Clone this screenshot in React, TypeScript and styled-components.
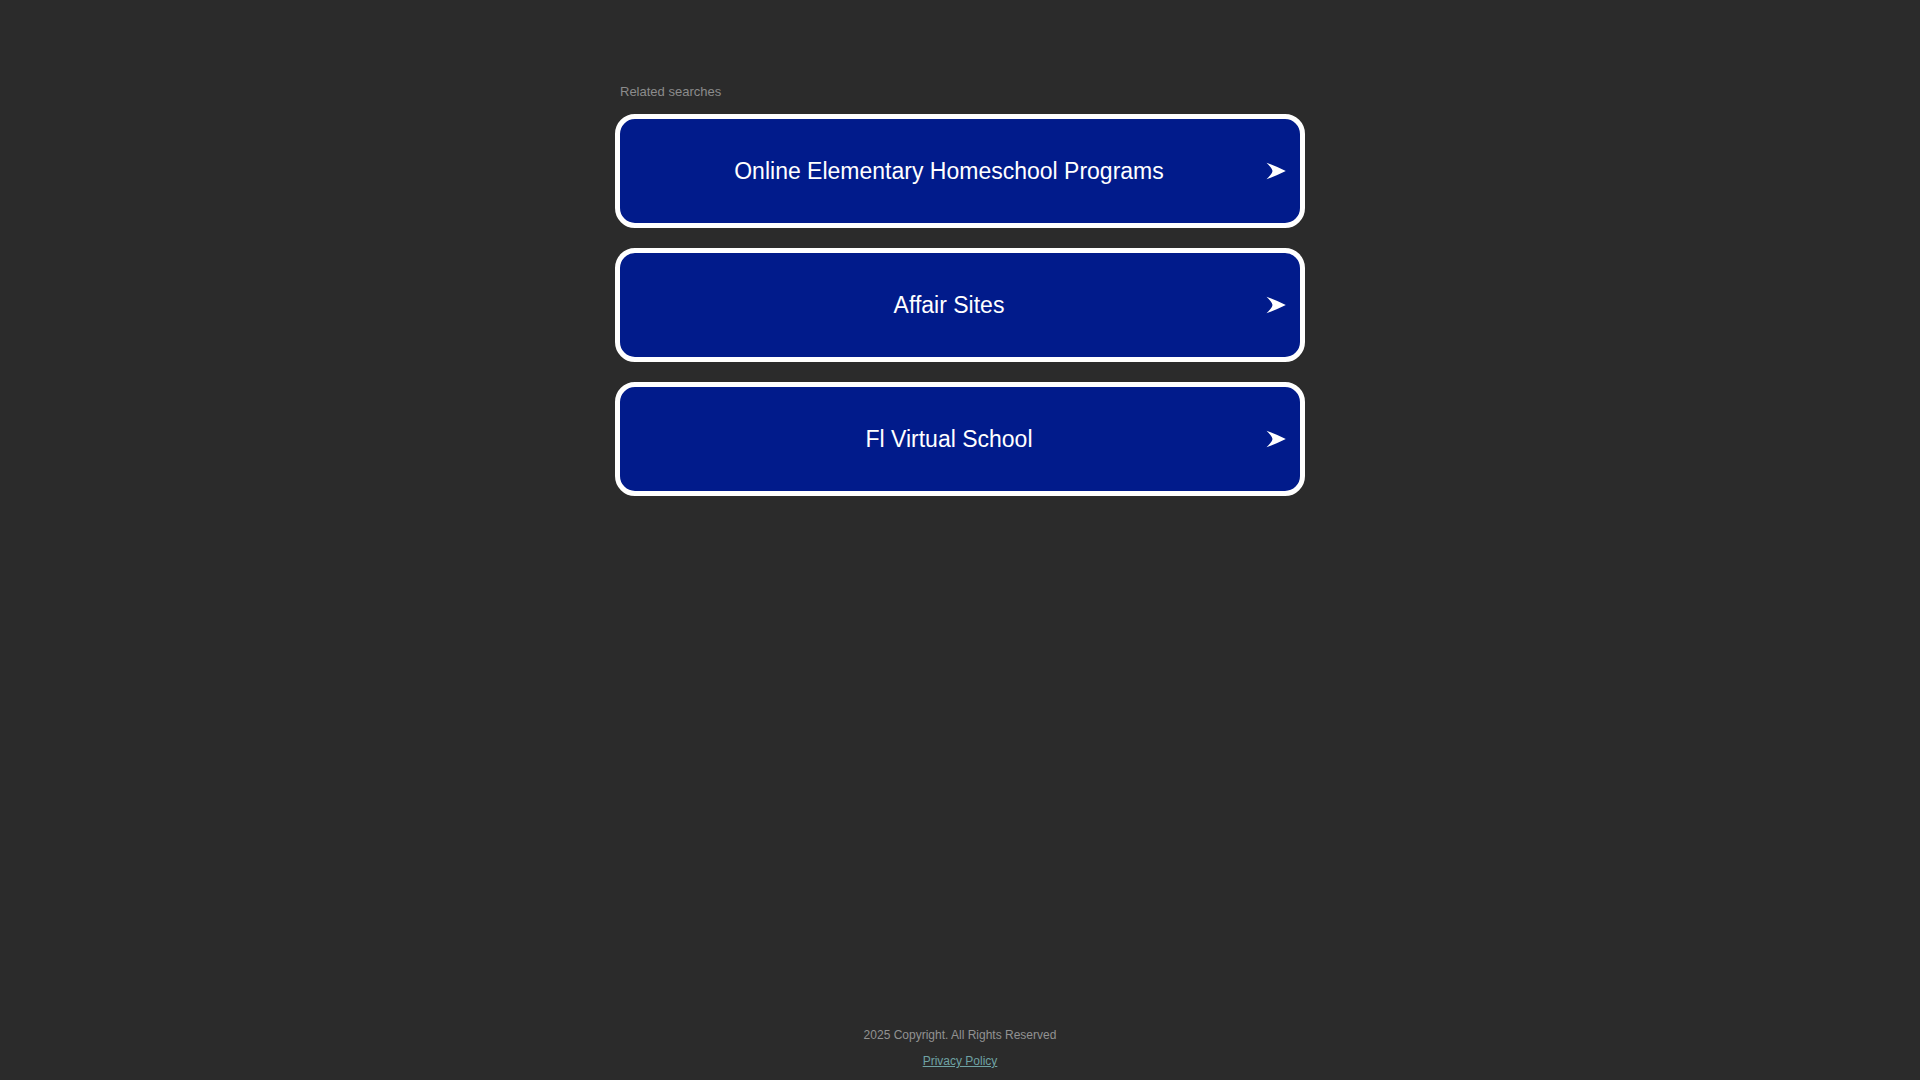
import React from "react";
import styled, { createGlobalStyle } from "styled-components";

const GlobalStyle = createGlobalStyle`
  html, body {
    margin: 0;
    padding: 0;
    background: #2b2b2b;
  }
  body {
    font-family: "Liberation Sans", Arial, sans-serif;
  }
`;

const Page = styled.div`
  min-height: 100vh;
  display: flex;
  flex-direction: column;
  align-items: center;
  box-sizing: border-box;
  padding-top: 84px;
  padding-bottom: 12px;
`;

const Results = styled.section`
  width: 690px;
  display: flex;
  flex-direction: column;
`;

const Heading = styled.div`
  font-size: 13px;
  line-height: 15px;
  color: #8c8c8c;
  padding-left: 5px;
  margin-bottom: 15px;
`;

const List = styled.div`
  display: flex;
  flex-direction: column;
  gap: 20px;
`;

const LinkBox = styled.a`
  display: flex;
  align-items: center;
  height: 114px;
  box-sizing: border-box;
  background: #011b8b;
  border: 5px solid #ffffff;
  border-radius: 20px;
  padding: 0 14px 0 16px;
  gap: 4px;
  color: #ffffff;
  text-decoration: none;
  cursor: pointer;
`;

const Label = styled.span`
  flex: 1;
  text-align: center;
  font-size: 23px;
`;

const Arrow = styled.svg`
  width: 20px;
  height: 18px;
  flex: none;
  display: block;
`;

const Footer = styled.footer`
  margin-top: auto;
  display: flex;
  flex-direction: column;
  align-items: center;
  gap: 12px;
  font-size: 12px;
`;

const Copy = styled.div`
  color: #929292;
`;

const Privacy = styled.a`
  color: #6fa2a4;
  text-decoration: underline;
`;

const items = [
  "Online Elementary Homeschool Programs",
  "Affair Sites",
  "Fl Virtual School",
];

export default function App() {
  return (
    <>
      <GlobalStyle />
      <Page>
        <Results>
          <Heading>Related searches</Heading>
          <List>
            {items.map((t) => (
              <LinkBox key={t}>
                <Label>{t}</Label>
                <Arrow viewBox="0 0 20 18">
                  <path
                    d="M0.5 0.8 Q8 3.2 19.8 9 Q8 14.8 0.5 17.2 Q6.5 11.5 6.5 9 Q6.5 6.5 0.5 0.8 Z"
                    fill="#ffffff"
                  />
                </Arrow>
              </LinkBox>
            ))}
          </List>
        </Results>
        <Footer>
          <Copy>2025 Copyright. All Rights Reserved</Copy>
          <Privacy>Privacy Policy</Privacy>
        </Footer>
      </Page>
    </>
  );
}
